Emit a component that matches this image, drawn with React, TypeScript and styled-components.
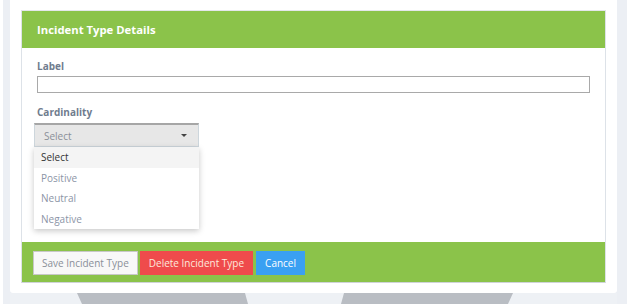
import React from "react";
import styled, { createGlobalStyle } from "styled-components";

const GlobalStyle = createGlobalStyle`
  html, body {
    margin: 0;
    padding: 0;
    background: #ffffff;
    font-family: "Open Sans", "Liberation Sans", sans-serif;
  }
  * {
    box-sizing: border-box;
  }
`;

const Page = styled.div`
  width: 628px;
  height: 304px;
  padding: 0 1px 0 3px;
  overflow: hidden;
`;

const Frame = styled.div`
  background: #eceff4;
  height: 304px;
  padding: 0 10px 0 7px;
  display: flex;
  flex-direction: column;
`;

const Card = styled.div`
  background: #ffffff;
  height: 293px;
  border-radius: 0 0 3px 3px;
  padding: 10px 11px 0 11px;
`;

const Stand = styled.div`
  height: 11px;
  display: flex;
  background: #eef1f5;
`;

const Slab = styled.div<{ $w: number; $ml: number; $shape: string }>`
  width: ${(p) => p.$w}px;
  margin-left: ${(p) => p.$ml}px;
  background: #b9bdc3;
  clip-path: ${(p) => p.$shape};
`;

const Panel = styled.div`
  border: 1px solid #dde2e8;
  border-top-color: #e4e7eb;
  border-bottom-color: #cfd3d8;
`;

const Header = styled.div`
  background: #8bc34a;
  height: 37px;
  display: flex;
  align-items: center;
  padding: 0 15px;
  color: #ffffff;
  font-size: 11.3px;
  font-weight: 700;
`;

const Body = styled.div`
  height: 194px;
  padding: 10px 15px 0 15px;
  display: flex;
  flex-direction: column;
`;

const FieldLabel = styled.div`
  color: #6f7c8e;
  font-size: 10px;
  font-weight: 700;
  height: 17px;
  line-height: 17px;
  margin-bottom: 1px;
`;

const TextInput = styled.div`
  height: 17px;
  border: 1px solid #a9a9a9;
  margin-bottom: 11px;
`;

const SelectWrap = styled.div`
  position: relative;
  width: 165px;
  margin-left: -3px;
  margin-top: 1px;
`;

const SelectBox = styled.div`
  height: 24px;
  background: #e7e7e7;
  border: 1px solid #cdd6dc;
  border-top: 2px solid #a6a6a6;
  display: flex;
  align-items: center;
  justify-content: space-between;
  padding: 0 11px 0 9px;
  color: #8a8f98;
  font-size: 10px;
`;

const Caret = styled.span`
  width: 0;
  height: 0;
  border-left: 3px solid transparent;
  border-right: 3px solid transparent;
  border-top: 3px solid #444;
`;

const Menu = styled.ul`
  position: absolute;
  top: 24px;
  left: 0;
  width: 165px;
  margin: 0;
  padding: 0;
  list-style: none;
  background: #ffffff;
  box-shadow: 0 2px 6px rgba(0, 0, 0, 0.22);
`;

const MenuItem = styled.li<{ $active?: boolean }>`
  height: 20.5px;
  line-height: 20.5px;
  padding: 0 7px;
  font-size: 10px;
  color: ${(p) => (p.$active ? "#333333" : "#8b94a6")};
  background: ${(p) => (p.$active ? "#f4f4f4" : "transparent")};
`;

const Footer = styled.div`
  background: #8bc34a;
  height: 40px;
  display: flex;
  align-items: flex-start;
  gap: 2px;
  padding: 9px 11px 0 11px;
`;

const Button = styled.button<{ $variant: "save" | "delete" | "cancel" }>`
  height: 24px;
  padding: 0 8px;
  font-family: inherit;
  font-size: 10px;
  border: 1px solid
    ${(p) => (p.$variant === "save" ? "#c8c8c8" : "transparent")};
  background: ${(p) =>
    p.$variant === "save"
      ? "#f8f8f8"
      : p.$variant === "delete"
      ? "#ef4b4c"
      : "#3aa0f2"};
  color: ${(p) =>
    p.$variant === "save"
      ? "#8a8f98"
      : p.$variant === "delete"
      ? "#fde9dc"
      : "#ffffff"};
  margin-left: ${(p) => (p.$variant === "cancel" ? "1px" : "0")};
`;

const options = ["Select", "Positive", "Neutral", "Negative"];

export default function App() {
  return (
    <>
      <GlobalStyle />
      <Page>
        <Frame>
          <Card>
            <Panel>
              <Header>Incident Type Details</Header>
              <Body>
                <FieldLabel>Label</FieldLabel>
                <TextInput />
                <FieldLabel>Cardinality</FieldLabel>
                <SelectWrap>
                  <SelectBox>
                    <span>Select</span>
                    <Caret />
                  </SelectBox>
                  <Menu>
                    {options.map((o, i) => (
                      <MenuItem key={o} $active={i === 0}>
                        {o}
                      </MenuItem>
                    ))}
                  </Menu>
                </SelectWrap>
              </Body>
              <Footer>
                <Button $variant="save">Save Incident Type</Button>
                <Button $variant="delete">Delete Incident Type</Button>
                <Button $variant="cancel">Cancel</Button>
              </Footer>
            </Panel>
          </Card>
          <Stand>
            <Slab
              $ml={67}
              $w={171}
              $shape="polygon(0 0, 168px 0, 171px 100%, 5px 100%)"
            />
            <Slab
              $ml={93}
              $w={172}
              $shape="polygon(3px 0, 172px 0, 167px 100%, 0 100%)"
            />
          </Stand>
        </Frame>
      </Page>
    </>
  );
}
